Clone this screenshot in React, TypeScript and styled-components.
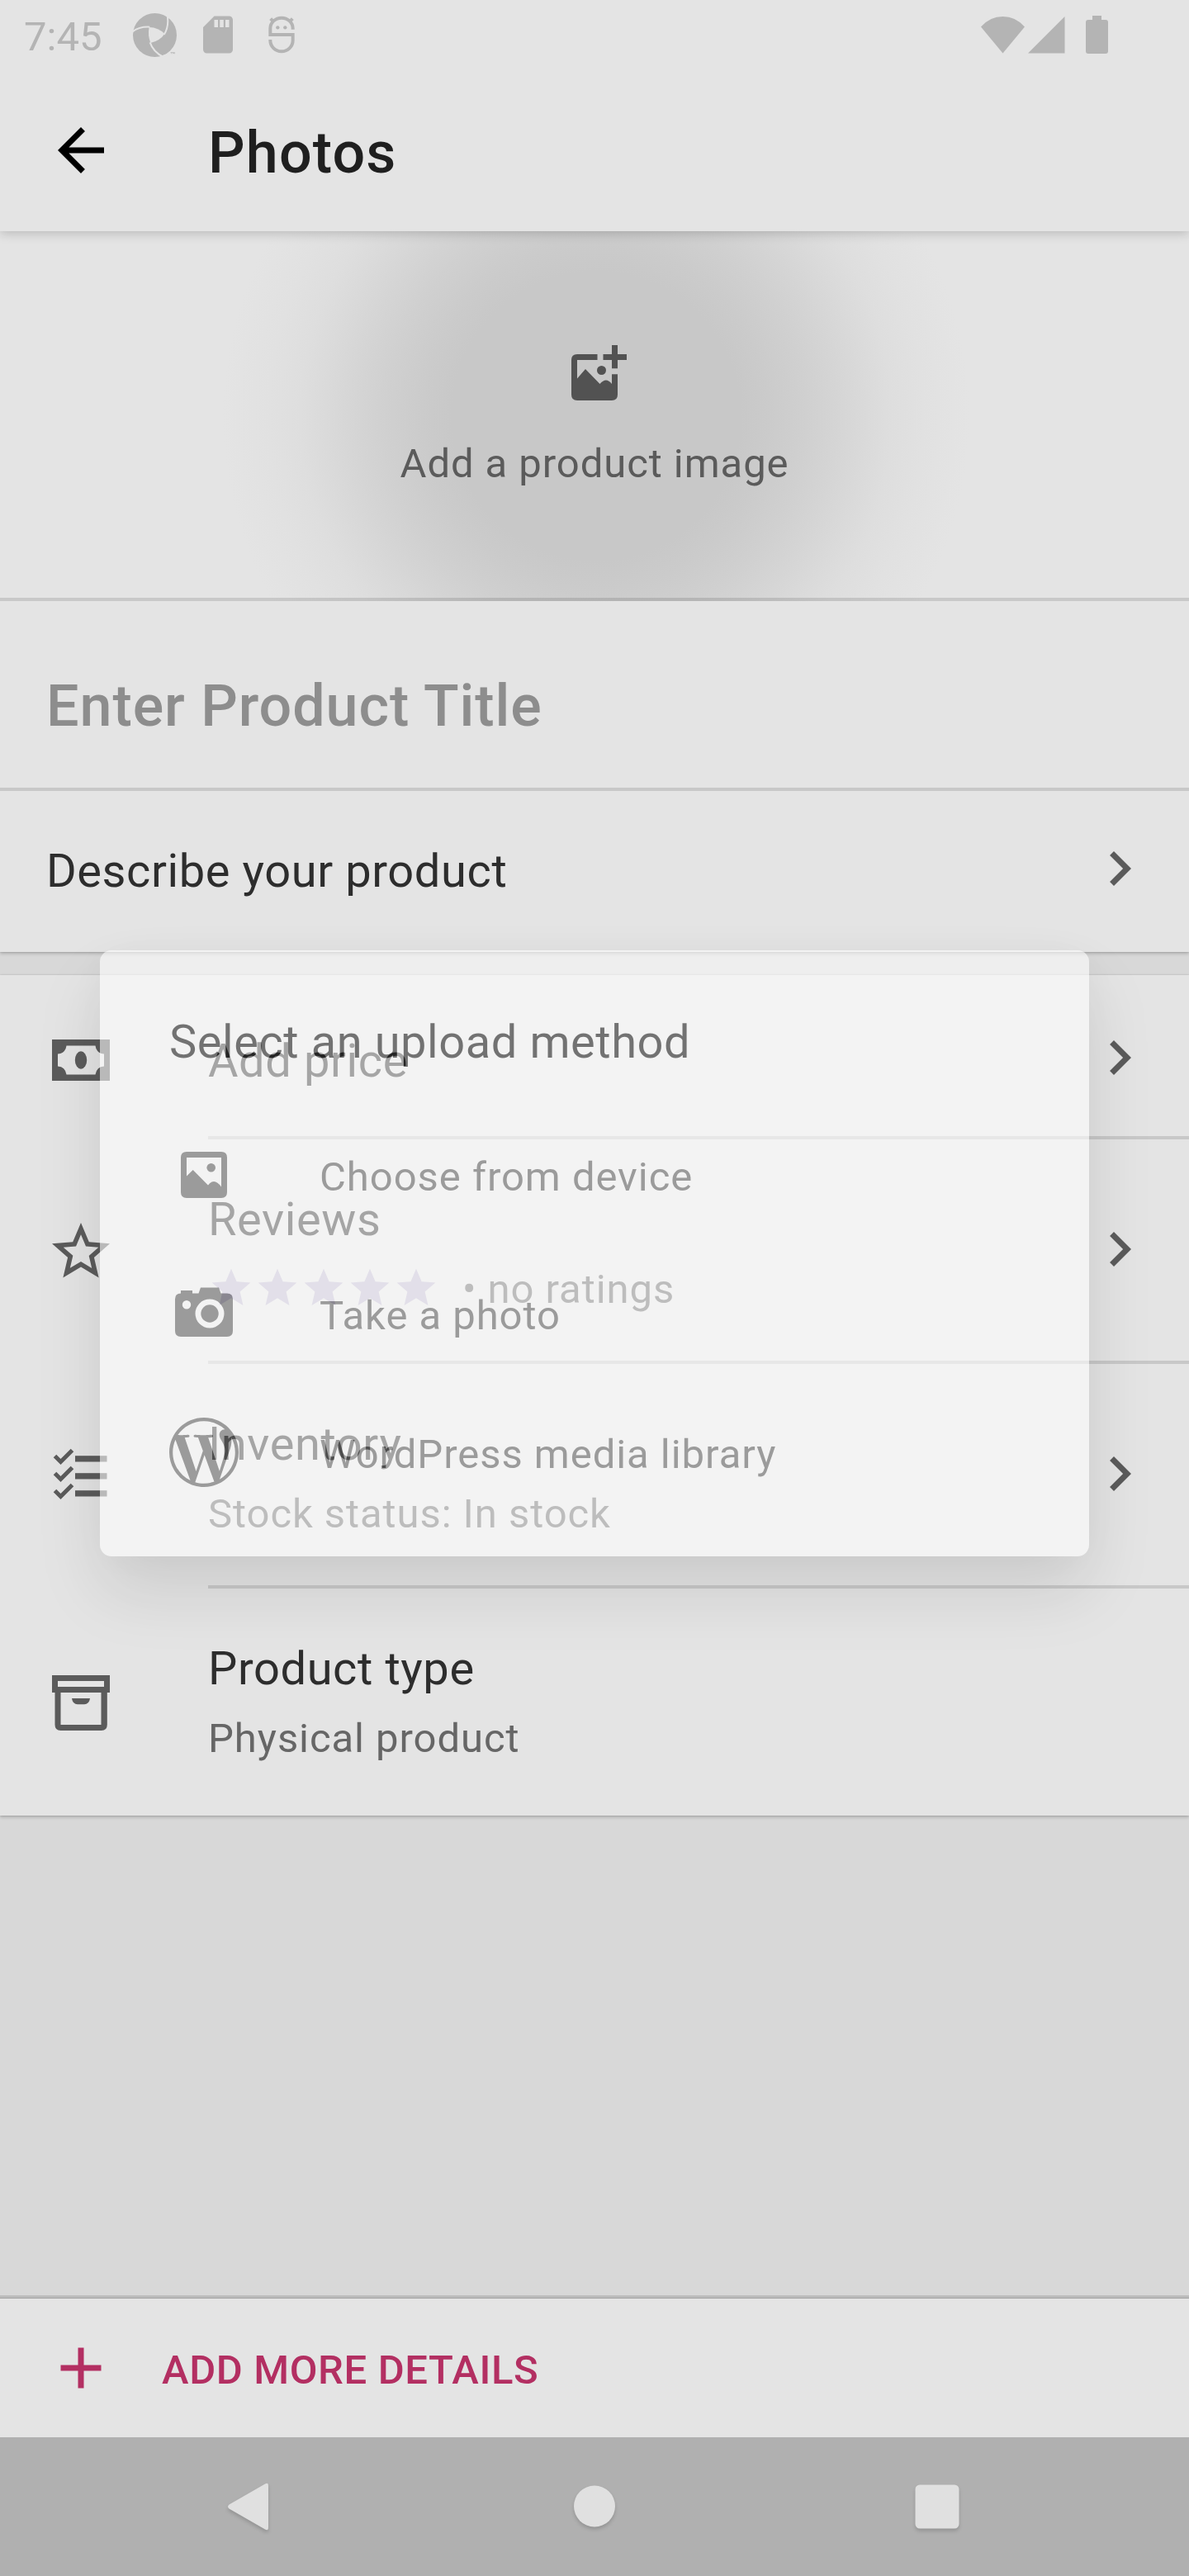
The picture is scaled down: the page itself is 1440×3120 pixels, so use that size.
import React from "react";
import styled, { createGlobalStyle } from "styled-components";
import { SiWordpress } from "react-icons/si";

const color = {
  surface: "#e4e4e4",
  canvas: "#d8d8d8",
  divider: "rgba(0, 0, 0, 0.12)",
  high: "#2d2d2d",
  medium: "#666666",
  icon: "#5b5b5b",
  status: "#b4b4b4",
  accent: "#b32f62",
};

const GlobalStyle = createGlobalStyle`
  *, *::before, *::after { box-sizing: border-box; }
  html, body { margin: 0; padding: 0; background: ${color.canvas}; }
  body { font-family: Roboto, "Noto Sans", sans-serif; }
`;

const Screen = styled.div`
  position: relative;
  display: flex;
  flex-direction: column;
  width: 1440px;
  height: 3120px;
  overflow: hidden;
  background: ${color.canvas};
`;

const Header = styled.header`
  position: relative;
  z-index: 1;
  flex: none;
  background: ${color.surface};
  box-shadow: 0 3px 12px rgba(0, 0, 0, 0.18);
`;

const StatusBar = styled.div`
  display: flex;
  align-items: center;
  justify-content: space-between;
  height: 84px;
  padding: 0 98px 0 29px;
  color: ${color.status};
`;

const StatusLeft = styled.div`
  display: flex;
  align-items: center;
`;

const StatusRight = styled.div`
  display: flex;
  align-items: center;
`;

const Clock = styled.span`
  width: 131px;
  padding-top: 5px;
  font-size: 49px;
  line-height: 84px;
`;

const Glyph = styled.svg<{ $w?: number; $h?: number; $gap?: number }>`
  display: block;
  flex: none;
  width: ${(p) => p.$w ?? 84}px;
  height: ${(p) => p.$h ?? p.$w ?? 84}px;
  margin-left: ${(p) => p.$gap ?? 0}px;
  fill: currentColor;
`;

const Toolbar = styled.div`
  display: flex;
  align-items: center;
  gap: 112px;
  height: 196px;
  padding: 0 56px;
  color: #000;
`;

const ToolbarTitle = styled.h1`
  margin: 0;
  padding-top: 6px;
  font-size: 70px;
  line-height: 82px;
  font-weight: 500;
  letter-spacing: 0.0165em;
  color: #1f1f1f;
`;

const Card = styled.section`
  position: relative;
  flex: none;
  background: ${color.surface};
  box-shadow: 0 2px 4px rgba(0, 0, 0, 0.2), 0 0 2px rgba(0, 0, 0, 0.16);
`;

const ImageDrop = styled.div`
  display: flex;
  flex-direction: column;
  align-items: center;
  height: 448px;
  padding-top: 131px;
  border-bottom: 4px solid ${color.divider};
  color: #525252;
  background: radial-gradient(
      circle at 722px 224px,
      #c8c8c8 0,
      #c8c8c8 175px,
      #cbcbcb 210px,
      #d0d0d0 255px,
      #d5d5d5 293px,
      #dadada 328px,
      #dedede 358px,
      #e1e1e1 396px,
      #e4e4e4 452px
    )
    border-box no-repeat;
`;

const ImageLabel = styled.span`
  margin-top: 25px;
  font-size: 49px;
  line-height: 84px;
  letter-spacing: 0.019em;
  color: #5b5b5b;
`;

const TitleField = styled.div`
  display: flex;
  align-items: center;
  height: 226px;
  padding: 28px 56px 0;
  font-size: 70px;
  font-weight: 500;
  letter-spacing: 0.0135em;
  color: #8d8d8d;
`;

const Divider = styled.div<{ $inset?: number }>`
  height: 4px;
  margin-left: ${(p) => p.$inset ?? 0}px;
  background: ${color.divider};
`;

const Row = styled.div<{ $h: number }>`
  display: flex;
  align-items: center;
  height: ${(p) => p.$h}px;
  padding: 0 42px 0 56px;
  color: ${color.icon};
`;

const RowText = styled.div<{ $drop?: number; $inset?: boolean }>`
  flex: 1;
  margin-left: ${(p) => (p.$inset ? 112 : 0)}px;
  padding-top: ${(p) => p.$drop ?? 0}px;
`;

const RowTitle = styled.div`
  font-size: 56px;
  line-height: 85px;
  letter-spacing: 0.0105em;
  color: ${color.high};
`;

const RowNote = styled.div`
  display: flex;
  align-items: center;
  font-size: 49px;
  line-height: 84px;
  letter-spacing: 0.019em;
  color: ${color.medium};
`;

const Stars = styled.div`
  display: flex;
  margin: 0 28px 4px 0;
  color: #bbb4cc;
`;

const ChevronBox = styled.div<{ $shift: number }>`
  padding-bottom: ${(p) => Math.max(0, -p.$shift * 2)}px;
  padding-top: ${(p) => Math.max(0, p.$shift * 2)}px;
`;

const IconBox = styled.div<{ $drop?: number }>`
  padding-top: ${(p) => p.$drop ?? 0}px;
`;

const Gap = styled.div`
  flex: none;
  height: 28px;
`;

const Spacer = styled.div`
  flex: 1;
`;

const DetailsBar = styled.div`
  display: flex;
  align-items: center;
  flex: none;
  gap: 56px;
  height: 168px;
  padding: 0 56px;
  background: ${color.surface};
  color: ${color.accent};
  box-shadow: 0 -1px 1px rgba(0, 0, 0, 0.12);
`;

const DetailsLabel = styled.span`
  padding-top: 5px;
  font-size: 49px;
  line-height: 58px;
  font-weight: 500;
  letter-spacing: 0.013em;
`;

const NavBar = styled.nav`
  display: grid;
  grid-template-columns: repeat(3, 415px);
  justify-content: center;
  justify-items: center;
  align-items: center;
  flex: none;
  height: 168px;
  background: #b0b0b0;
  color: #e0e0e0;
`;

const NavGlyph = styled(Glyph)`
  filter: drop-shadow(0 3px 2px rgba(0, 0, 0, 0.16));
`;

const Dialog = styled.div`
  position: absolute;
  z-index: 2;
  top: 1151px;
  left: 121px;
  display: flex;
  flex-direction: column;
  width: 1198px;
  height: 734px;
  padding: 0 84px;
  border-radius: 14px;
  background: #fff;
  opacity: 0.571;
  box-shadow: 0 42px 84px rgba(0, 0, 0, 0.19), 0 0 50px rgba(0, 0, 0, 0.05);
`;

const DialogTitle = styled.h2`
  margin: 0;
  padding-top: 69px;
  height: 188px;
  font-size: 56px;
  line-height: 84px;
  font-weight: 400;
  letter-spacing: 0.01em;
  color: #1f1f1f;
`;

const Option = styled.div`
  display: flex;
  align-items: center;
  gap: 98px;
  height: 168px;
  color: #666;
`;

const OptionLabel = styled.span`
  padding-top: 5px;
  font-size: 49px;
  line-height: 84px;
  letter-spacing: 0.0195em;
`;

const WordPressMark = styled(SiWordpress)`
  display: block;
  flex: none;
  width: 84px;
  height: 84px;
`;

const Chevron = ({ shift = 0 }: { shift?: number }) => (
  <ChevronBox $shift={shift}>
    <Glyph viewBox="0 0 24 24">
      <path d="M10 6 8.59 7.41 13.17 12l-4.58 4.59L10 18l6-6z" />
    </Glyph>
  </ChevronBox>
);

const ApertureIcon = () => (
  <Glyph viewBox="450 33 165 165" $w={55}>
    <circle cx="532.5" cy="115.5" r="79.5" />
    <path
      d="M512 87 Q546 88 568 111 Q552 136 517 144 Q506 116 512 87Z"
      fill={color.surface}
    />
    <path
      d="M450 104 Q476 84 514 86 M577 40 Q586 82 566 114 M566 196 Q527 178 515 142"
      fill="none"
      stroke={color.surface}
      strokeWidth="6"
    />
    <path d="M556 200 L560 189 Q574 186 584 180 L620 184 L600 205Z" fill={color.surface} />
    <path d="M590 177h6v2h-2v5h-2v-5h-2zM597 177h2l2 3 2-3h2v7h-2v-4l-2 3-2-3v4h-2z" />
  </Glyph>
);

const SdCardIcon = () => (
  <Glyph viewBox="0 0 24 24" $w={54} $gap={22}>
    <path d="M18 2h-8L4.02 8 4 20c0 1.1.9 2 2 2h12c1.1 0 2-.9 2-2V4c0-1.1-.9-2-2-2zm-6 6h-2V4h2v4zm3 0h-2V4h2v4zm3 0h-2V4h2v4z" />
  </Glyph>
);

const DroidIcon = () => (
  <Glyph viewBox="940 43 108 144" $w={36} $h={48} $gap={32}>
    <g fill="none" stroke="currentColor" strokeWidth="12">
      <path d="M1035 96V92A41 38 0 0 0 953 92V115H1035V136A41 40 0 0 1 953 136V133" />
      <path d="M954 57l12 12M1034 57l-12 12" />
    </g>
    <circle cx="980" cy="89" r="6.5" />
    <circle cx="1007" cy="89" r="6.5" />
  </Glyph>
);

const WifiIcon = () => (
  <Glyph viewBox="0 0 53 45" $w={53} $h={45}>
    <path d="M0 12.5Q11 0 26.5 0T53 12.5L26.5 44.5Z" />
  </Glyph>
);

const SignalIcon = () => (
  <Glyph viewBox="0 0 45 45" $w={45} $h={45} $gap={4}>
    <path d="M0 44.5 44.5 0V44.5Z" />
  </Glyph>
);

const BatteryIcon = () => (
  <Glyph viewBox="0 0 27 46" $w={27} $h={46} $gap={25}>
    <path d="M8 0H19V5H24Q27 5 27 8V43Q27 46 24 46H3Q0 46 0 43V8Q0 5 3 5H8Z" />
  </Glyph>
);

const ArrowBackIcon = () => (
  <Glyph viewBox="0 0 24 24">
    <path d="M20 11H7.83l5.59-5.59L12 4l-8 8 8 8 1.41-1.41L7.83 13H20v-2z" />
  </Glyph>
);

const AddImageIcon = () => (
  <Glyph viewBox="0 0 84 84">
    <path d="M45.5 18H21Q14 18 14 25V67Q14 74 21 74H63Q70 74 70 67V42.300H63V54Q56 45 48.500 54L31 36 21 47.500V25H45.500Z" />
    <circle cx="50.500" cy="37.500" r="5.500" />
    <path d="M63 7H70V18H81V25H70V35.300H63V25H52.500V18H63Z" />
  </Glyph>
);

const ImageIcon = () => (
  <Glyph viewBox="0 0 84 84">
    <path
      fillRule="evenodd"
      d="M21 14H63Q70 14 70 21V63Q70 70 63 70H21Q14 70 14 63V21Q14 14 21 14ZM21 21V43.500L28.700 36 47 54.500Q54.500 44.500 63 56.500V21Z"
    />
    <circle cx="50.700" cy="33.300" r="5.300" />
  </Glyph>
);

const CameraIcon = () => (
  <Glyph viewBox="0 0 84 84">
    <path
      fillRule="evenodd"
      d="M14 14H28V17.500H35.500L38 10.500H60L62.500 17.500H70Q77 17.500 77 24.500V63Q77 70 70 70H14Q7 70 7 63V24.500Q7 17.500 14 17.500ZM21 26A5.200 5.200 0 1 0 21 36.400A5.200 5.200 0 1 0 21 26ZM49 24.500A17.500 17.500 0 1 0 49 59.500A17.500 17.500 0 1 0 49 24.500Z"
    />
    <circle cx="49" cy="42" r="10.700" />
  </Glyph>
);

const MoneyIcon = () => (
  <Glyph viewBox="0 0 84 84">
    <path
      fillRule="evenodd"
      d="M7 17H77V67H7ZM24.500 24.500Q23 34 14 34.500V49.500Q23 50 24.500 59.500H59.500Q61 50 70 49.500V34.500Q61 34 59.500 24.500Z"
    />
    <ellipse cx="42" cy="42" rx="7.200" ry="10.700" />
  </Glyph>
);

const StarOutlineIcon = () => (
  <Glyph viewBox="0 0 24 24">
    <path d="M22 9.240l-7.190-.62L12 2 9.190 8.630 2 9.240l5.460 4.730L5.820 21 12 17.270 18.180 21l-1.630-7.030L22 9.240zM12 15.400l-3.760 2.270 1-4.280-3.320-2.880 4.380-.38L12 6.100l1.710 4.040 4.380.38-3.320 2.880 1 4.280L12 15.400z" />
  </Glyph>
);

const StarIcon = () => (
  <Glyph viewBox="0 0 24 24" $w={56}>
    <path d="M12 17.270L18.180 21l-1.640-7.030L22 9.240l-7.190-.61L12 2 9.190 8.630 2 9.240l5.460 4.730L5.820 21z" />
  </Glyph>
);

const ChecklistIcon = () => (
  <Glyph viewBox="0 0 84 84">
    {[0, 21, 42].map((y) => (
      <g key={y}>
        <path
          d={`M10.500 ${y + 19.500}L17.500 ${y + 26.500}L31.500 ${y + 12.500}`}
          fill="none"
          stroke="currentColor"
          strokeWidth="5"
        />
        <rect x="35" y={y + 19.200} width="38.500" height="7.300" />
      </g>
    ))}
  </Glyph>
);

const ArchiveIcon = () => (
  <Glyph viewBox="0 0 84 84">
    <path
      fillRule="evenodd"
      d="M7 7H77V28H73.800V67Q73.800 74 66.800 74H17.500Q10.500 74 10.500 67V28H7ZM14 14V21H70V14ZM17.500 28V67H66.500V28Z"
    />
    <path d="M31 35H53Q52 42.300 46 42.300H38Q32 42.300 31 35Z" />
  </Glyph>
);

const PlusIcon = () => (
  <Glyph viewBox="0 0 84 84">
    <path d="M38.500 17.500H45.500V38.500H66.500V45.500H45.500V66.500H38.500V45.500H17.500V38.500H38.500Z" />
  </Glyph>
);

export default function App() {
  return (
    <>
      <GlobalStyle />
      <Screen>
        <Header>
          <StatusBar>
            <StatusLeft>
              <Clock>7:45</Clock>
              <ApertureIcon />
              <SdCardIcon />
              <DroidIcon />
            </StatusLeft>
            <StatusRight>
              <WifiIcon />
              <SignalIcon />
              <BatteryIcon />
            </StatusRight>
          </StatusBar>
          <Toolbar>
            <ArrowBackIcon />
            <ToolbarTitle>Photos</ToolbarTitle>
          </Toolbar>
        </Header>

        <Card>
          <ImageDrop>
            <AddImageIcon />
            <ImageLabel>Add a product image</ImageLabel>
          </ImageDrop>
          <TitleField>Enter Product Title</TitleField>
          <Divider />
          <Row $h={195}>
            <RowText>
              <RowTitle>Describe your product</RowTitle>
            </RowText>
            <Chevron shift={-4} />
          </Row>
        </Card>

        <Gap />

        <Card>
          <Row $h={195}>
            <IconBox $drop={10}>
              <MoneyIcon />
            </IconBox>
            <RowText $inset $drop={13}>
              <RowTitle>Add price</RowTitle>
            </RowText>
            <Chevron shift={2} />
          </Row>
          <Divider $inset={252} />
          <Row $h={268}>
            <IconBox $drop={4}>
              <StarOutlineIcon />
            </IconBox>
            <RowText $inset $drop={10}>
              <RowTitle>Reviews</RowTitle>
              <RowNote>
                <Stars>
                  {[1, 2, 3, 4, 5].map((n) => (
                    <StarIcon key={n} />
                  ))}
                </Stars>
                • no ratings
              </RowNote>
            </RowText>
            <Chevron shift={-1} />
          </Row>
          <Divider $inset={252} />
          <Row $h={268}>
            <IconBox>
              <ChecklistIcon />
            </IconBox>
            <RowText $inset $drop={10}>
              <RowTitle>Inventory</RowTitle>
              <RowNote>Stock status: In stock</RowNote>
            </RowText>
            <Chevron shift={-1} />
          </Row>
          <Divider $inset={252} />
          <Row $h={275}>
            <IconBox $drop={4}>
              <ArchiveIcon />
            </IconBox>
            <RowText $inset $drop={3}>
              <RowTitle>Product type</RowTitle>
              <RowNote>Physical product</RowNote>
            </RowText>
          </Row>
        </Card>

        <Spacer />

        <Divider />
        <DetailsBar>
          <PlusIcon />
          <DetailsLabel>ADD MORE DETAILS</DetailsLabel>
        </DetailsBar>

        <NavBar>
          <NavGlyph viewBox="0 0 84 84">
            <path d="M58 14.500Q62 12 62 17V67Q62 72 58 69.500L14.500 44.500Q11.500 42 14.500 39.500Z" />
          </NavGlyph>
          <NavGlyph viewBox="0 0 84 84">
            <circle cx="42" cy="41.500" r="25" />
          </NavGlyph>
          <NavGlyph viewBox="0 0 84 84">
            <rect x="15.500" y="15.500" width="53" height="53" rx="5.500" />
          </NavGlyph>
        </NavBar>

        <Dialog>
          <DialogTitle>Select an upload method</DialogTitle>
          <Option>
            <ImageIcon />
            <OptionLabel>Choose from device</OptionLabel>
          </Option>
          <Option>
            <CameraIcon />
            <OptionLabel>Take a photo</OptionLabel>
          </Option>
          <Option>
            <WordPressMark />
            <OptionLabel>WordPress media library</OptionLabel>
          </Option>
        </Dialog>
      </Screen>
    </>
  );
}
